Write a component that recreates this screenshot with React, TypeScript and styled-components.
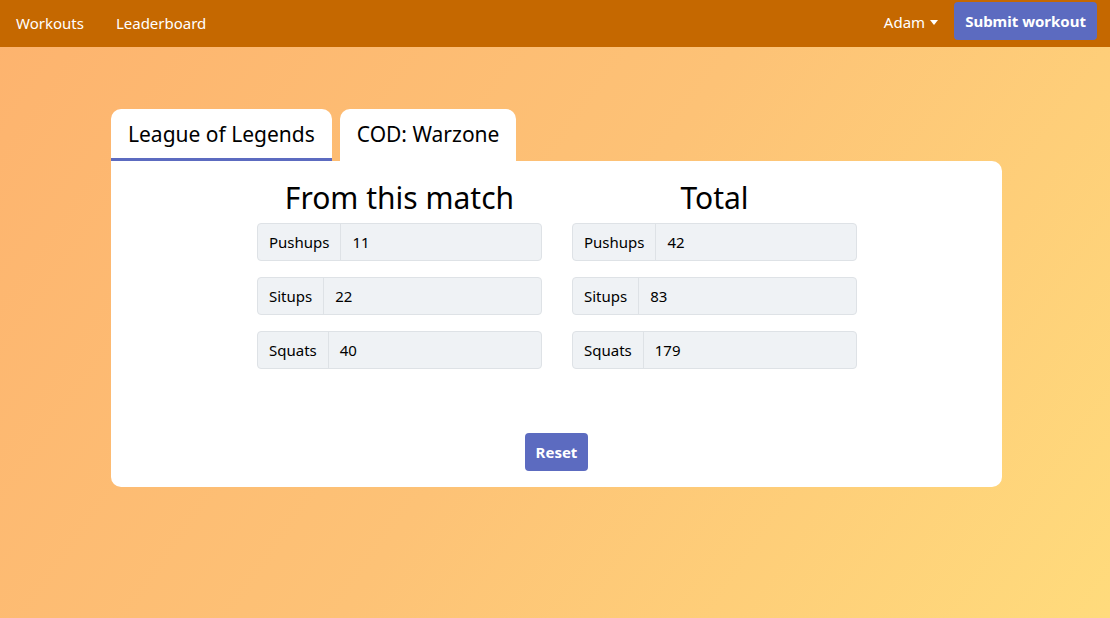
import React from "react";
import styled, { createGlobalStyle } from "styled-components";

type Stat = {
  label: string,
  value: number
}

const matchStats: Stat[] = [
  { label: "Pushups", value: 11 },
  { label: "Situps", value: 22 },
  { label: "Squats", value: 40 },
];

const totalStats: Stat[] = [
  { label: "Pushups", value: 42 },
  { label: "Situps", value: 83 },
  { label: "Squats", value: 179 },
];

// Styles
const GlobalStyle = createGlobalStyle`
  html, body {
    margin: 0;
    padding: 0;
  }
  body {
    font-family: "Noto Sans", "Open Sans", sans-serif;
    background: linear-gradient(125deg, #fdb36e 0%, #fdc276 50%, #ffdb7c 100%);
    min-height: 618px;
    color: #000;
  }
`;

const Nav = styled.nav`
  height: 47px;
  background-color: #c56800;
  display: flex;
  align-items: center;
  justify-content: space-between;
  padding: 0 13px 2px 16px;
  box-sizing: border-box;
`;

const NavLinks = styled.div`
  display: flex;
  gap: 32px;
`;

const NavLink = styled.a`
  color: #fff;
  font-size: 15px;
  text-decoration: none;
`;

const NavRight = styled.div`
  display: flex;
  align-items: center;
  gap: 16px;
  align-self: flex-start;
  margin-top: 2px;
`;

const UserMenu = styled.span`
  color: #fff;
  font-size: 15px;
  display: flex;
  align-items: center;
  gap: 5px;
  margin-top: 2px;
  &::after {
    content: "";
    border-top: 5px solid #fff;
    border-left: 4px solid transparent;
    border-right: 4px solid transparent;
    margin-top: 1px;
  }
`;

const Button = styled.button`
  background-color: #5c6bc0;
  color: #fff;
  border: none;
  border-radius: 4px;
  font-family: inherit;
  font-weight: bold;
  font-size: 15px;
  height: 38px;
  padding: 0 11px;
  cursor: pointer;
`;

const Main = styled.main`
  width: 891px;
  margin: 62px 0 0 111px;
`;

const Tabs = styled.div`
  display: flex;
  gap: 8px;
`;

const Tab = styled.div<{ $active?: boolean }>`
  background: #fff;
  border-radius: 10px 10px 0 0;
  height: 52px;
  box-sizing: border-box;
  padding: 0 17px;
  display: flex;
  align-items: center;
  font-size: 21px;
  border-bottom: 3px solid ${p => (p.$active ? "#5c6bc0" : "transparent")};
`;

const Card = styled.section`
  background: #fff;
  border-radius: 0 10px 10px 10px;
  padding: 16px 0 16px;
  display: flex;
  flex-direction: column;
  align-items: center;
`;

const Columns = styled.div`
  display: grid;
  grid-template-columns: 285px 285px;
  gap: 30px;
  margin-left: 1px;
`;

const Column = styled.div`
  display: flex;
  flex-direction: column;
  gap: 16px;
`;

const Heading = styled.h2`
  font-weight: normal;
  font-size: 30px;
  text-align: center;
  margin: 0 0 -11px;
  line-height: 41px;
`;

const InputGroup = styled.div`
  display: flex;
  height: 38px;
  border: 1px solid #dee2e6;
  border-radius: 4px;
  background: #eff2f5;
  box-sizing: border-box;
  font-size: 15px;
`;

const Addon = styled.span`
  display: flex;
  align-items: center;
  padding: 0 11px;
  border-right: 1px solid #dee2e6;
`;

const Value = styled.span`
  display: flex;
  align-items: center;
  padding: 0 11px;
  flex: 1;
`;

const Footer = styled.div`
  margin-top: 64px;
`;

const StatColumn = (props: { title: string, stats: Stat[] }) => (
  <Column>
    <Heading>{props.title}</Heading>
    {props.stats.map(s => (
      <InputGroup key={s.label}>
        <Addon>{s.label}</Addon>
        <Value>{s.value}</Value>
      </InputGroup>
    ))}
  </Column>
);

const App = () => {
  return (
    <>
      <GlobalStyle />
      <Nav>
        <NavLinks>
          <NavLink>Workouts</NavLink>
          <NavLink>Leaderboard</NavLink>
        </NavLinks>
        <NavRight>
          <UserMenu>Adam</UserMenu>
          <Button>Submit workout</Button>
        </NavRight>
      </Nav>
      <Main>
        <Tabs>
          <Tab $active>League of Legends</Tab>
          <Tab>COD: Warzone</Tab>
        </Tabs>
        <Card>
          <Columns>
            <StatColumn title="From this match" stats={matchStats} />
            <StatColumn title="Total" stats={totalStats} />
          </Columns>
          <Footer>
            <Button>Reset</Button>
          </Footer>
        </Card>
      </Main>
    </>
  );
}

export default App;
